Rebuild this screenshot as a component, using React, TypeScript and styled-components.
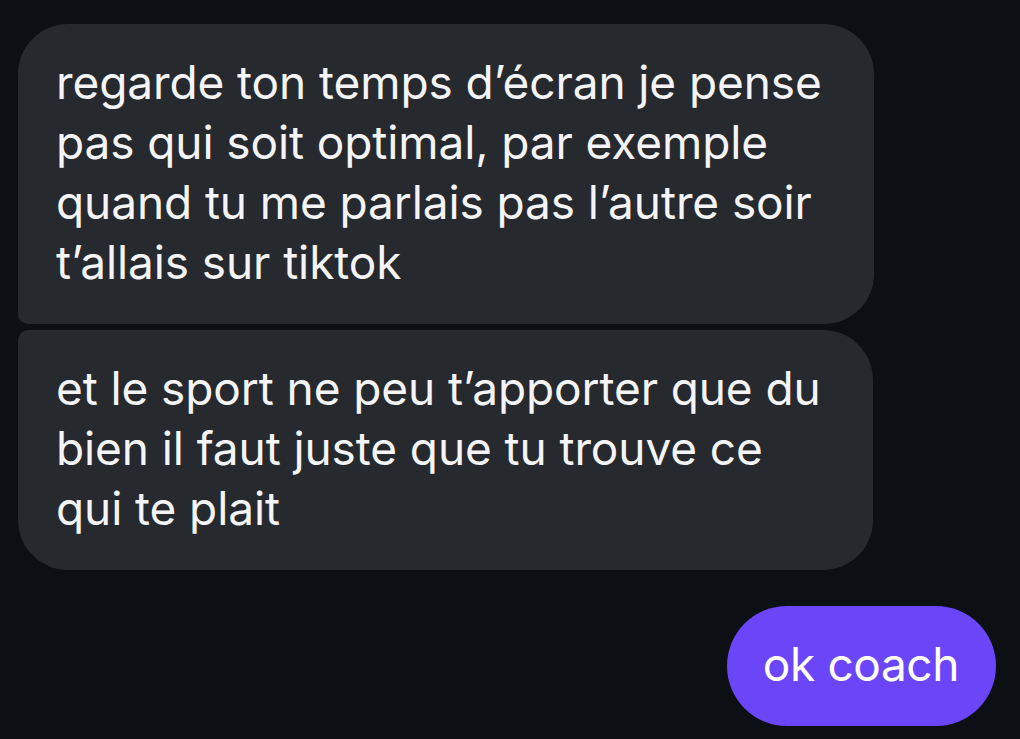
import React from 'react'
import styled, { createGlobalStyle } from 'styled-components'

const GlobalStyle = createGlobalStyle`
  html, body {
    margin: 0;
    padding: 0;
    background: #0c0f13;
  }
  body {
    font-family: Inter, "Noto Sans", "Liberation Sans", sans-serif;
    -webkit-font-smoothing: antialiased;
  }
`

const Thread = styled.div`
  display: flex;
  flex-direction: column;
  align-items: flex-start;
  width: 1020px;
  height: 739px;
  box-sizing: border-box;
  padding: 24px 24px 0 18px;
  background: #0c0f13;
  overflow: hidden;
`

const Bubble = styled.div<{ $first?: boolean; $last?: boolean }>`
  box-sizing: border-box;
  width: fit-content;
  padding: 28px 52px 32px 38px;
  margin-bottom: ${({ $last }) => ($last ? '36px' : '6px')};
  background: #26292e;
  color: #f4f4f6;
  font-size: 46px;
  line-height: 60px;
  letter-spacing: -0.1px;
  border-radius: ${({ $first, $last }) =>
    `${$first ? 50 : 10}px 50px 50px ${$last ? 50 : 10}px`};
`

const Line = styled.span`
  display: block;
  white-space: nowrap;
`

const Sent = styled.div`
  align-self: flex-end;
  box-sizing: border-box;
  height: 120px;
  padding: 28px 37px 32px 36px;
  background: #6b46f8;
  color: #ffffff;
  font-size: 46px;
  line-height: 60px;
  letter-spacing: -0.4px;
  border-radius: 60px;
  white-space: nowrap;
`

export default function App() {
  return (
    <>
      <GlobalStyle />
      <Thread>
        <Bubble $first>
          <Line>regarde ton temps d’écran je pense</Line>
          <Line>pas qui soit optimal, par exemple</Line>
          <Line>quand tu me parlais pas l’autre soir</Line>
          <Line>t’allais sur tiktok</Line>
        </Bubble>
        <Bubble $last>
          <Line>et le sport ne peu t’apporter que du</Line>
          <Line>bien il faut juste que tu trouve ce</Line>
          <Line>qui te plait</Line>
        </Bubble>
        <Sent>ok coach</Sent>
      </Thread>
    </>
  )
}
